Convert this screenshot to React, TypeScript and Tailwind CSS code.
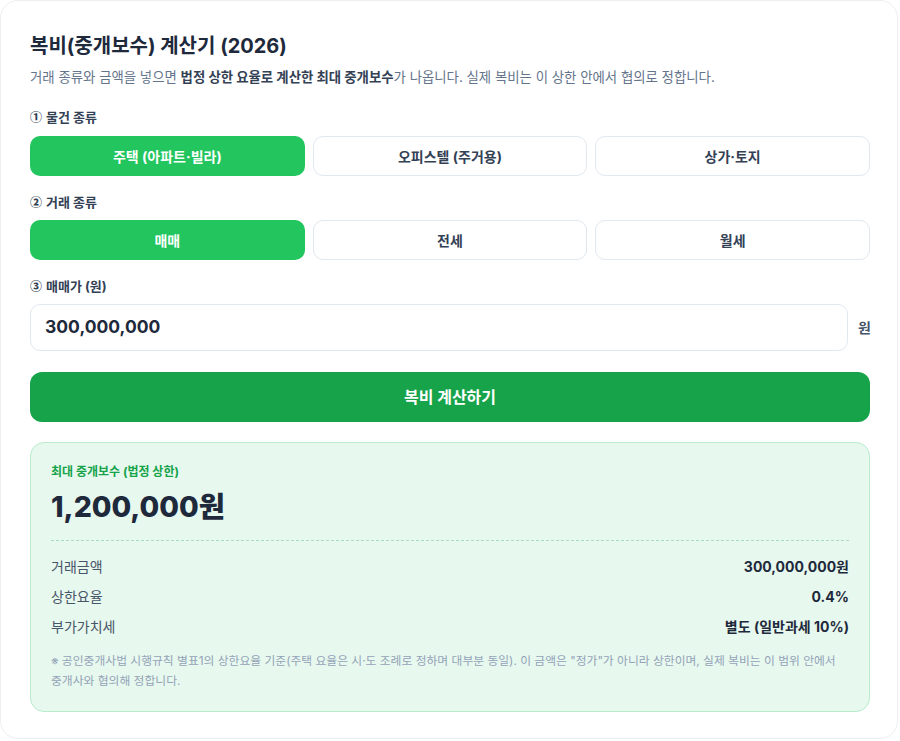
import React from "react";

const font = { fontFamily: 'Inter, "Noto Sans CJK KR", sans-serif' };
const cjk = { fontFamily: '"Noto Sans CJK KR", sans-serif' };

function Seg({ items, active }: { items: string[]; active: number }) {
  return (
    <div className="grid grid-cols-3 gap-2">
      {items.map((t, i) => (
        <button
          key={t}
          className={
            i === active
              ? "h-10 rounded-[10px] bg-[#22c55e] text-white text-[14px] font-bold"
              : "h-10 rounded-[10px] bg-white border border-[#e2e8f0] text-[#334155] text-[14px] font-bold"
          }
        >
          {t}
        </button>
      ))}
    </div>
  );
}

function Label({ n, t, className }: { n: string; t: string; className: string }) {
  return (
    <div className={"text-[13px] font-bold text-[#334155] leading-[18px] flex items-center gap-[4px] " + className}>
      <span style={cjk} className="text-[12px] font-black">{n}</span>
      <span>{t}</span>
    </div>
  );
}

export default function App() {
  return (
    <div className="bg-white w-[900px] h-[741px]" style={font}>
      <div className="w-[898px] h-[739px] border border-[#eceef1] rounded-[18px] bg-white pl-[29px] pr-[27px] pt-[30px]">
        <h1 className="text-[20px] font-bold text-[#1e293b] leading-[30px]">복비(중개보수) 계산기 (2026)</h1>
        <p className="mt-[7px] text-[13.4px] text-[#64748b] leading-[18px] whitespace-nowrap">
          거래 종류와 금액을 넣으면 <b className="text-[#334155]">법정 상한 요율로 계산한 최대 중개보수</b>가 나옵니다. 실제 복비는 이 상한 안에서 협의로 정합니다.
        </p>

        <Label n="①" t="물건 종류" className="mt-[22px]" />
        <div className="mt-[10px]">
          <Seg items={["주택 (아파트·빌라)", "오피스텔 (주거용)", "상가·토지"]} active={0} />
        </div>

        <Label n="②" t="거래 종류" className="mt-[17px]" />
        <div className="mt-[9px]">
          <Seg items={["매매", "전세", "월세"]} active={0} />
        </div>

        <Label n="③" t="매매가 (원)" className="mt-[17px]" />
        <div className="mt-[9px] flex items-center gap-[10px]">
          <div className="flex-1 h-[47px] rounded-[10px] border border-[#e2e8f0] bg-white flex items-center px-[14px] text-[17.5px] font-bold text-[#1e293b]">
            300,000,000
          </div>
          <span className="text-[14px] font-bold text-[#475569] w-[12px]">원</span>
        </div>

        <button className="mt-[21px] w-full h-[50px] rounded-[12px] bg-[#16a34a] text-white text-[16px] font-bold">
          복비 계산하기
        </button>

        <div className="mt-[20px] rounded-[14px] border border-[#b9ebcc] bg-[#e7f8ee] px-[20px] pt-[20px] pb-[20px]">
          <div className="text-[12px] font-bold text-[#16a34a] leading-[18px]">최대 중개보수 (법정 상한)</div>
          <div className="mt-[6px] text-[28.5px] font-extrabold text-[#1e293b] leading-[40px]">1,200,000원</div>
          <div className="mt-[13px] border-t border-dashed border-[#a7dcc0]" />
          <div className="mt-[10px] flex flex-col text-[14px]">
            <div className="flex justify-between items-center h-[30px]">
              <span className="text-[#475569]">거래금액</span>
              <span className="font-bold text-[#1e293b]">300,000,000원</span>
            </div>
            <div className="flex justify-between items-center h-[30px]">
              <span className="text-[#475569]">상한요율</span>
              <span className="font-bold text-[#1e293b]">0.4%</span>
            </div>
            <div className="flex justify-between items-center h-[30px]">
              <span className="text-[#475569]">부가가치세</span>
              <span className="font-bold text-[#1e293b]">별도 (일반과세 10%)</span>
            </div>
          </div>
          <p className="mt-[10px] text-[11.8px] text-[#94a3b8] leading-[20px]">
            ※ 공인중개사법 시행규칙 별표1의 상한요율 기준(주택 요율은 시·도 조례로 정하며 대부분 동일). 이 금액은 "정가"가 아니라 상한이며, 실제 복비는 이 범위 안에서 중개사와 협의해 정합니다.
          </p>
        </div>
      </div>
    </div>
  );
}
